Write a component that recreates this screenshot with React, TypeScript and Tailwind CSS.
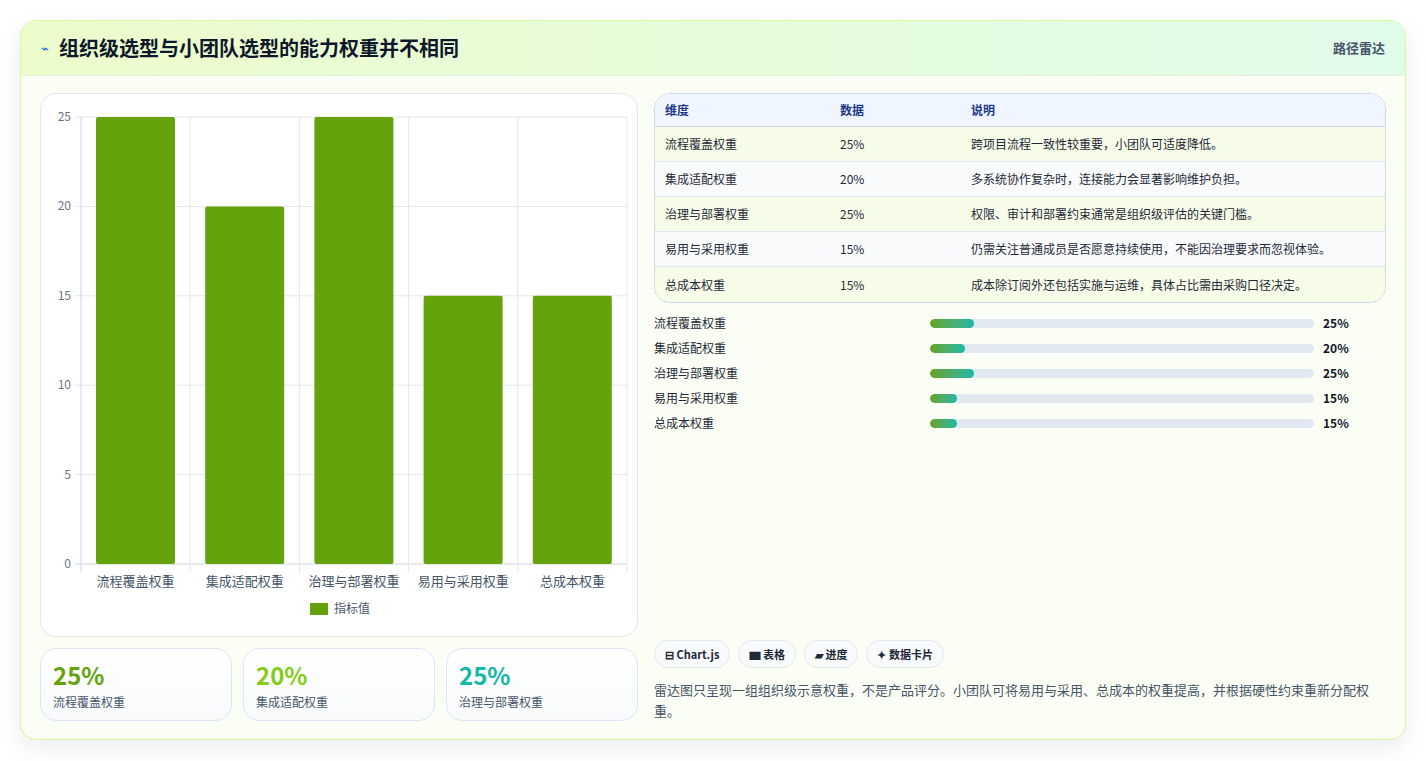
import React from 'react';

const rows = [
  { name: '流程覆盖权重', v: 25, note: '跨项目流程一致性较重要，小团队可适度降低。', w: 44 },
  { name: '集成适配权重', v: 20, note: '多系统协作复杂时，连接能力会显著影响维护负担。', w: 35 },
  { name: '治理与部署权重', v: 25, note: '权限、审计和部署约束通常是组织级评估的关键门槛。', w: 44 },
  { name: '易用与采用权重', v: 15, note: '仍需关注普通成员是否愿意持续使用，不能因治理要求而忽视体验。', w: 27 },
  { name: '总成本权重', v: 15, note: '成本除订阅外还包括实施与运维，具体占比需由采购口径决定。', w: 27 },
];

const font = { fontFamily: '"Noto Sans CJK SC", "Noto Sans", sans-serif' };

const Chart = () => {
  const x0 = 40, x1 = 586, y0 = 23, y1 = 470;
  const cw = (x1 - x0) / 5;
  const yFor = (v: number) => y1 - ((y1 - y0) * v) / 25;
  return (
    <svg width="598" height="542" className="block">
      {[0, 5, 10, 15, 20, 25].map((t) => (
        <g key={t}>
          <line x1={x0 - 6} x2={x1} y1={yFor(t)} y2={yFor(t)} stroke={t === 0 ? '#cbd5e1' : '#e5e7eb'} />
          <text x={x0 - 10} y={yFor(t) + 4} textAnchor="end" fontSize="12" fill="#64748b">{t}</text>
        </g>
      ))}
      {[0, 1, 2, 3, 4, 5].map((i) => (
        <line key={i} x1={x0 + cw * i} x2={x0 + cw * i} y1={y0} y2={y1 + 8} stroke={i === 0 ? '#cbd5e1' : '#e5e7eb'} />
      ))}
      {rows.map((r, i) => (
        <g key={r.name}>
          <rect x={x0 + cw * i + 15} y={yFor(r.v)} width={79} height={y1 - yFor(r.v)} rx="2" fill="#65a30d" />
          <text x={x0 + cw * i + cw / 2} y={492} textAnchor="middle" fontSize="13" fill="#475569">{r.name}</text>
        </g>
      ))}
      <rect x={269} y={509} width={18} height={12} fill="#65a30d" />
      <text x={293} y={519} fontSize="12" fill="#475569">指标值</text>
    </svg>
  );
};

export default function App() {
  return (
    <div className="min-h-screen bg-white pt-5 px-5" style={font}>
      <div className="rounded-2xl border border-[#d9f99d] bg-[#fbfef4] shadow-[0_8px_24px_rgba(15,23,42,0.08)] overflow-hidden">
        <div className="h-[55px] flex items-center justify-between px-5 border-b border-[#e2efd8] bg-gradient-to-r from-[#ecfccb] to-[#e0fbe9]">
          <div className="flex items-center gap-2.5">
            <span className="text-[#2563eb] text-[13px]">⌁</span>
            <h1 className="text-[20px] font-bold text-[#0f172a]">组织级选型与小团队选型的能力权重并不相同</h1>
          </div>
          <span className="text-[13px] font-semibold text-[#475569]">路径雷达</span>
        </div>
        <div className="flex gap-4 px-[19px] pt-[17px] pb-[18px]">
          <div className="w-[598px] flex flex-col gap-[11px]">
            <div className="h-[544px] rounded-2xl border border-[#dfe7f0] bg-white">
              <Chart />
            </div>
            <div className="grid grid-cols-3 gap-[11px]">
              {[
                ['25%', '流程覆盖权重', 'text-[#65a30d]'],
                ['20%', '集成适配权重', 'text-[#84cc16]'],
                ['25%', '治理与部署权重', 'text-[#14b8a6]'],
              ].map(([v, l, c]) => (
                <div key={l} className="h-[73px] rounded-2xl border border-[#dbe7f5] bg-gradient-to-b from-white to-[#f8fafc] px-3 pt-3">
                  <div className={`text-[24px] leading-7 font-bold ${c}`}>{v}</div>
                  <div className="text-[12px] text-[#475569] mt-1">{l}</div>
                </div>
              ))}
            </div>
          </div>
          <div className="flex-1 flex flex-col">
            <div className="rounded-2xl border border-[#cfd8e3] overflow-hidden">
              <div className="flex h-[33px] items-center bg-[#eff6ff] border-b border-[#cbd5e1] text-[12px] font-bold text-[#1e3a8a] px-2.5">
                <div className="w-[175px]">维度</div>
                <div className="w-[131px]">数据</div>
                <div>说明</div>
              </div>
              {rows.map((r, i) => (
                <div key={r.name} className={`flex h-[35px] items-center px-2.5 text-[12px] text-[#1f2937] ${i < 4 ? 'border-b border-[#e2e8f0]' : ''} ${i % 2 === 0 ? 'bg-[#f7fce9]' : 'bg-[#f8fafc]'}`}>
                  <div className="w-[175px]">{r.name}</div>
                  <div className="w-[131px]">{r.v}%</div>
                  <div>{r.note}</div>
                </div>
              ))}
            </div>
            <div className="flex flex-col gap-[9px] mt-[12px]">
              {rows.map((r) => (
                <div key={r.name} className="flex items-center h-4 text-[12px] text-[#1f2937]">
                  <div className="w-[276px]">{r.name}</div>
                  <div className="w-[384px] h-[9px] rounded-full bg-[#e2e8f0] overflow-hidden">
                    <div className="h-full rounded-full bg-gradient-to-r from-[#65a30d] to-[#14b8a6]" style={{ width: r.w }} />
                  </div>
                  <div className="ml-[9px] font-bold text-[#0f172a]">{r.v}%</div>
                </div>
              ))}
            </div>
            <div className="flex-1" />
            <div className="flex gap-2">
              {['⊟ Chart.js', '▆ 表格', '▰ 进度', '✦ 数据卡片'].map((c) => (
                <span key={c} className="h-[28px] px-2.5 flex items-center rounded-full border border-[#e2e8f0] bg-[#f8fafc] text-[11px] font-bold text-[#1f2937]">{c}</span>
              ))}
            </div>
            <p className="mt-[11px] text-[13px] leading-[21px] text-[#475569]">
              雷达图只呈现一组组织级示意权重，不是产品评分。小团队可将易用与采用、总成本的权重提高，并根据硬性约束重新分配权重。
            </p>
          </div>
        </div>
      </div>
    </div>
  );
}
